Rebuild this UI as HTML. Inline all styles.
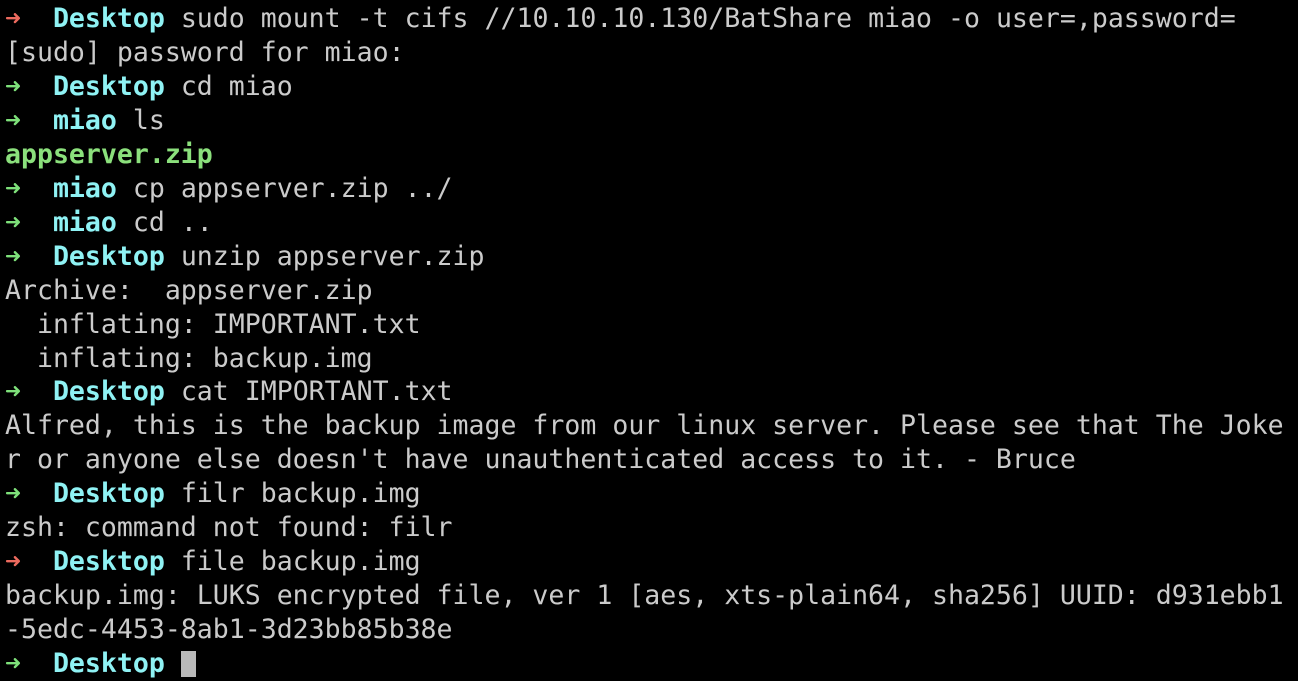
<html><head><style>
body{margin:0;background:#000;width:1298px;height:672px;overflow:hidden}
pre{margin:0;padding:2px 0 0 5px;font-family:"DejaVu Sans Mono","Liberation Mono",monospace;font-size:26.55px;line-height:33.95px;color:#cbcbcb;white-space:pre}
.r{color:#ec6a5e}.g{color:#7ee07a}.c{color:#8ff2f4;font-weight:bold}.z{color:#8be07c;font-weight:bold}
.cur{display:inline-block;width:15px;height:26px;background:#b9b9b9;vertical-align:-5px}
</style></head><body><pre><span class="r">➜</span>  <span class="c">Desktop</span> sudo mount -t cifs //10.10.10.130/BatShare miao -o user=,password=
[sudo] password for miao:
<span class="g">➜</span>  <span class="c">Desktop</span> cd miao
<span class="g">➜</span>  <span class="c">miao</span> ls
<span class="z">appserver.zip</span>
<span class="g">➜</span>  <span class="c">miao</span> cp appserver.zip ../
<span class="g">➜</span>  <span class="c">miao</span> cd ..
<span class="g">➜</span>  <span class="c">Desktop</span> unzip appserver.zip
Archive:  appserver.zip
  inflating: IMPORTANT.txt
  inflating: backup.img
<span class="g">➜</span>  <span class="c">Desktop</span> cat IMPORTANT.txt
Alfred, this is the backup image from our linux server. Please see that The Joke
r or anyone else doesn't have unauthenticated access to it. - Bruce
<span class="g">➜</span>  <span class="c">Desktop</span> filr backup.img
zsh: command not found: filr
<span class="r">➜</span>  <span class="c">Desktop</span> file backup.img
backup.img: LUKS encrypted file, ver 1 [aes, xts-plain64, sha256] UUID: d931ebb1
-5edc-4453-8ab1-3d23bb85b38e
<span class="g">➜</span>  <span class="c">Desktop</span> <span class="cur"></span></pre></body></html>
